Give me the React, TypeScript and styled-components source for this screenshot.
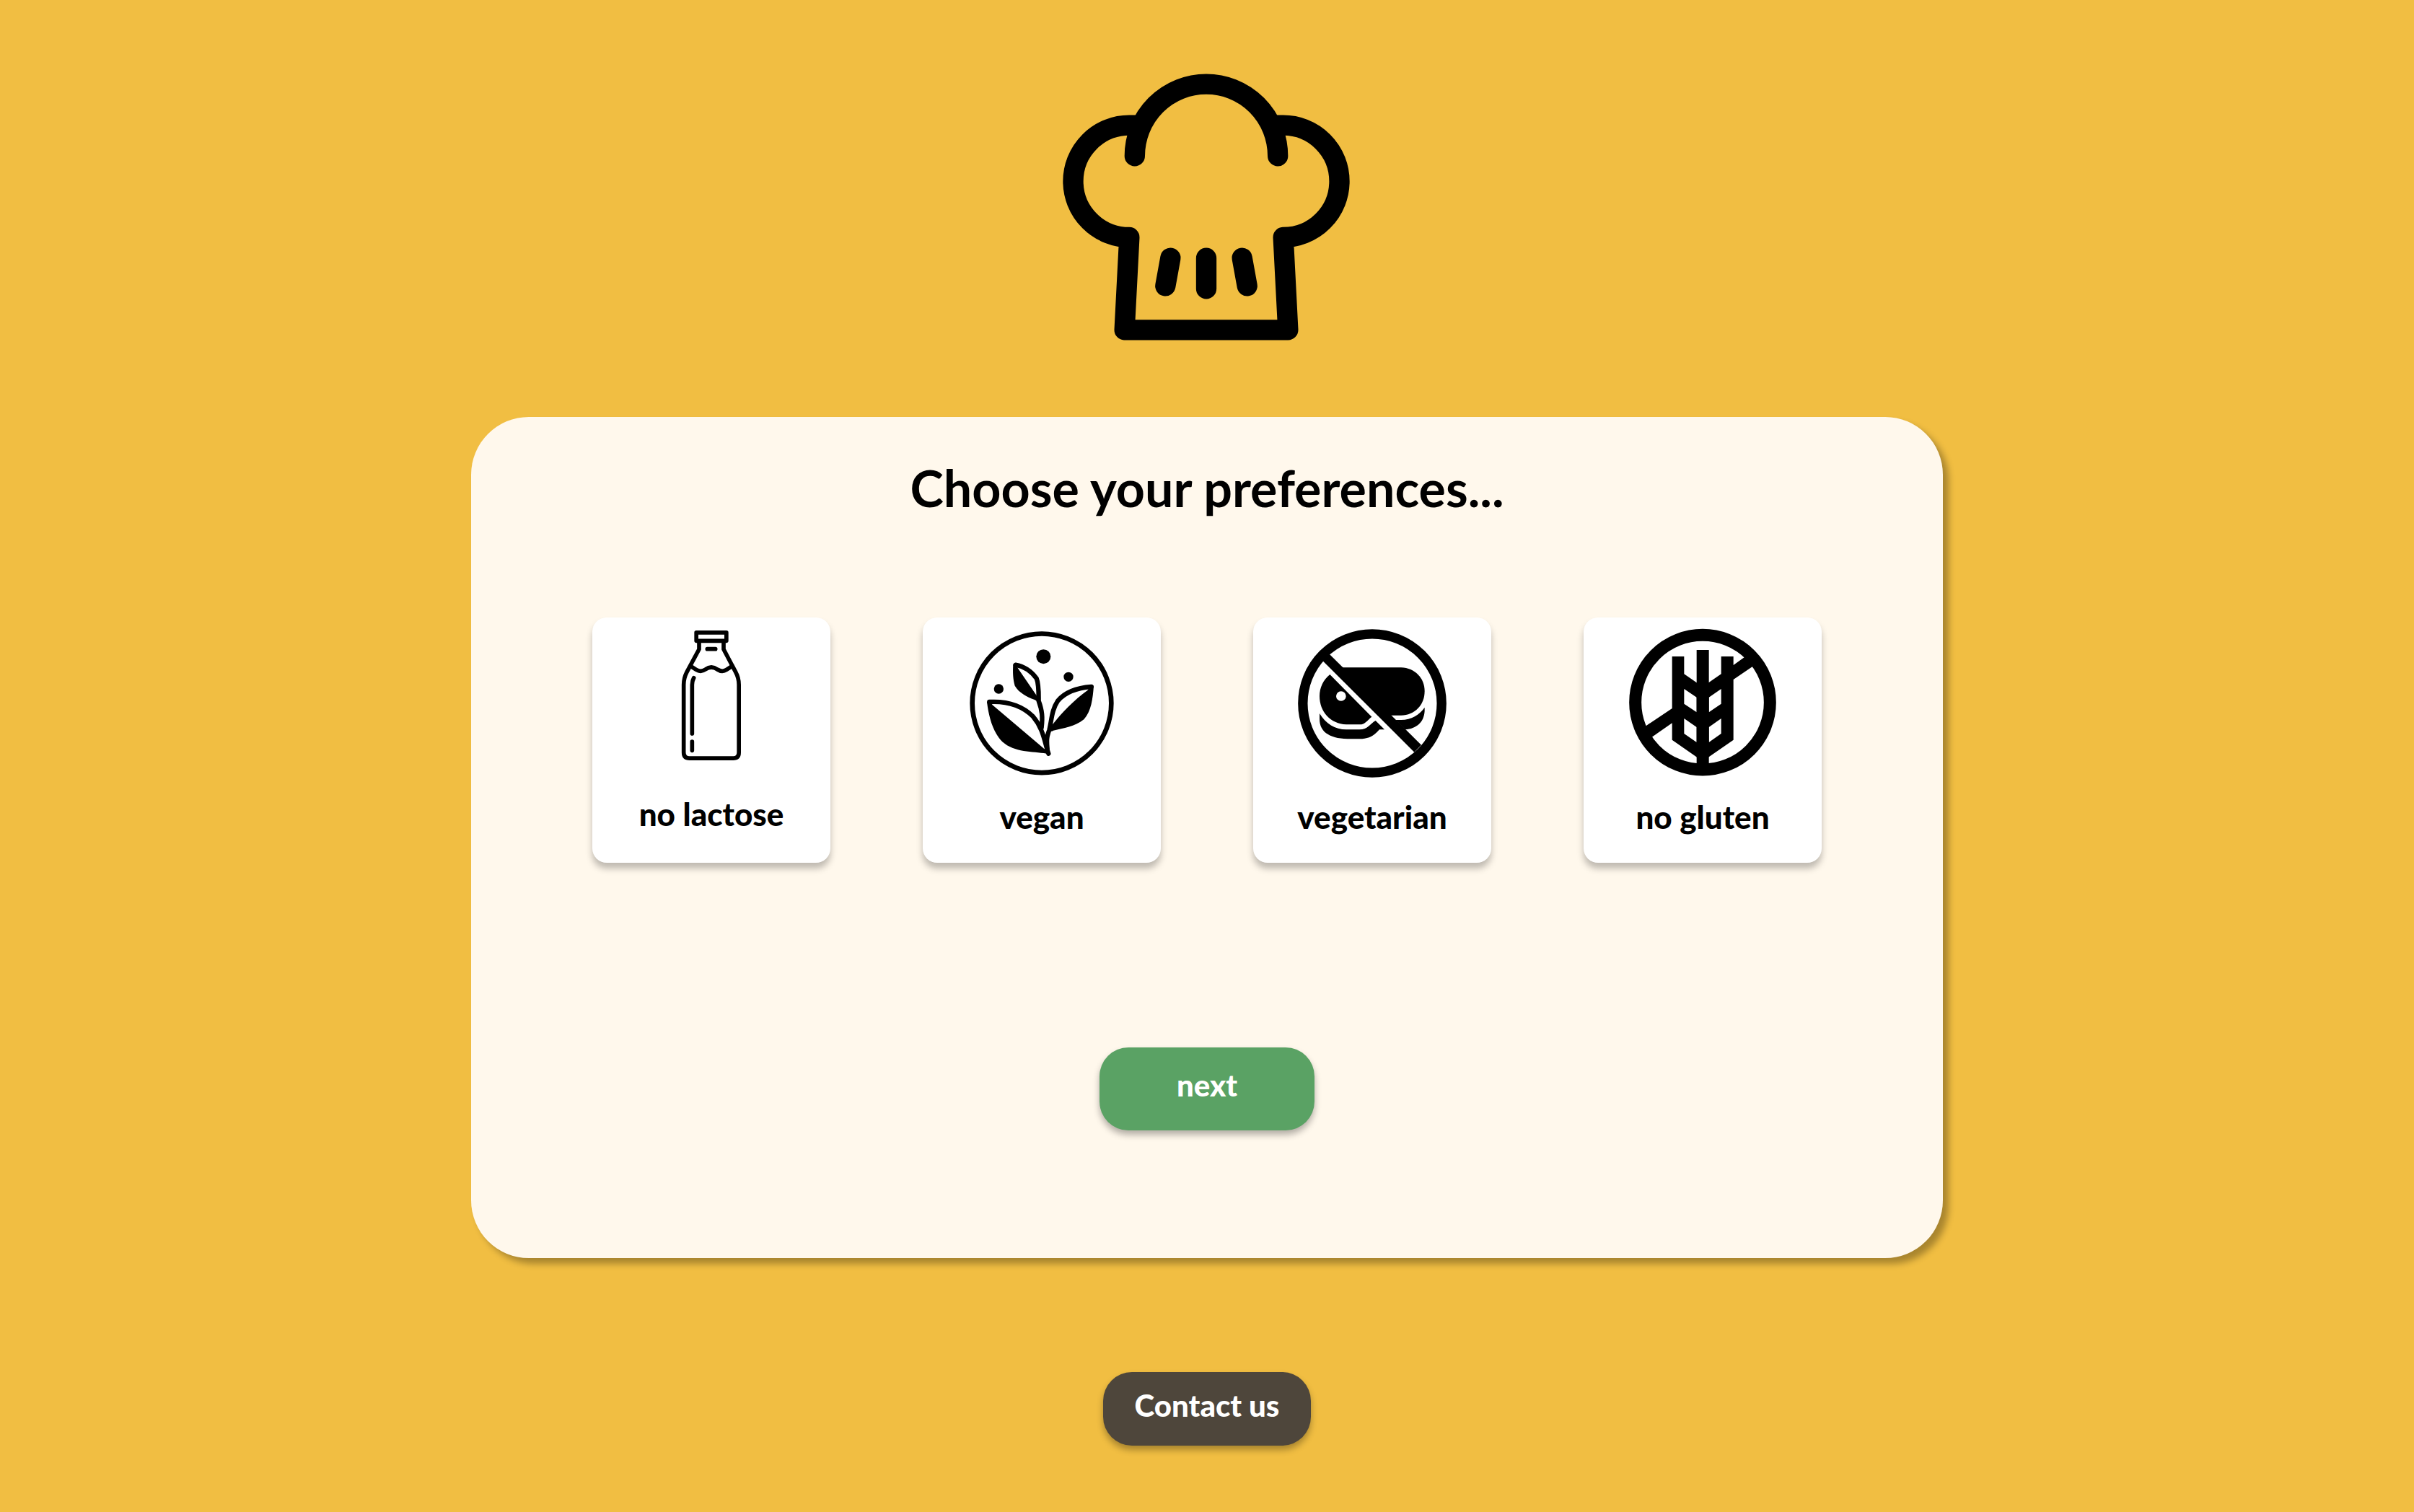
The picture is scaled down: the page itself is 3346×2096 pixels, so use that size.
import React, { useState } from 'react';
import styled, { createGlobalStyle } from 'styled-components';

const GlobalStyle = createGlobalStyle`
  *, *::before, *::after { box-sizing: border-box; }
  body {
    margin: 0;
    background: #f1be42;
    font-family: Lato, "Open Sans", sans-serif;
    color: #000;
  }
`;

const Page = styled.div`
  min-height: 100vh;
  display: flex;
  flex-direction: column;
  align-items: center;
  padding: 100px 0 92px;
`;

const Hat = styled.svg`
  display: block;
  width: 400px;
  height: 372px;
  fill: none;
  stroke: #000;
  stroke-width: 85;
  stroke-linecap: round;
  stroke-linejoin: round;
`;

const Panel = styled.main`
  width: 61%;
  min-width: 1240px;
  max-width: 2040px;
  margin-top: 106px;
  padding: 56px 64px 177px;
  display: flex;
  flex-direction: column;
  align-items: center;
  background: #fff8ec;
  border-radius: 80px;
  box-shadow: 8px 8px 10px rgba(0, 0, 0, 0.3);
`;

const Title = styled.h1`
  margin: 0;
  font-size: 70px;
  line-height: 84px;
  font-weight: 700;
`;

const Options = styled.div`
  display: flex;
  flex-wrap: wrap;
  justify-content: center;
  gap: 64px 128px;
  margin-top: 138px;
`;

const Card = styled.button`
  width: 330px;
  height: 340px;
  display: flex;
  flex-direction: column;
  align-items: center;
  padding: 12px 0 0;
  border: 0;
  border-radius: 20px;
  background: #fff;
  color: inherit;
  font: inherit;
  cursor: pointer;
  box-shadow: 0 8px 10px rgba(0, 0, 0, 0.25);
`;

const Art = styled.svg<{ $height: number }>`
  display: block;
  flex: none;
  width: 212px;
  height: ${(p) => p.$height}px;
`;

const Label = styled.span`
  margin-top: 28px;
  font-size: 44px;
  line-height: 48px;
  font-weight: 900;
`;

const PillButton = styled.button`
  border: 0;
  border-radius: 40px;
  color: #fff;
  font-family: inherit;
  font-size: 42px;
  line-height: 48px;
  font-weight: 900;
  cursor: pointer;
  box-shadow: 0 6px 10px rgba(0, 0, 0, 0.3);
`;

const NextButton = styled(PillButton)`
  width: 298px;
  margin-top: 256px;
  padding: 28px 24px 39px;
  background: #5aa264;
`;

const ContactButton = styled(PillButton)`
  width: 288px;
  margin-top: 158px;
  padding: 22px 24px 32px;
  background: #4e463b;
`;

const Bottle = () => (
  <Art $height={208} viewBox="237 84 636 624" aria-hidden="true">
    <g fill="none" stroke="#000" strokeWidth="17" strokeLinecap="round" strokeLinejoin="round">
      <path d="M492.500 110.500H617.500V145H492.500Z" />
      <path d="M504 147V180L453 275Q440 300 440 328V609Q440 633.500 464 633.500H646Q669.500 633.500 669.500 609V328Q669.500 300 656 275L606 180V147" />
      <path d="M538 179H572M482 299Q475 312 475 328V531M475 564V601" />
      <path d="M470 251L492 265Q511 277 530 264Q555 246 580 264Q600 277 618 265L640 251" />
    </g>
  </Art>
);

const Leaves = () => (
  <Art $height={212} viewBox="231 84 636 636" aria-hidden="true">
    <g fill="none" stroke="#000" strokeWidth="19" strokeLinecap="round" strokeLinejoin="round">
      <circle cx="549" cy="404.500" r="289" strokeWidth="20" />
      <path d="M440 245C478 252 507 274 527 301C537 325 536 360 536 395C551 436 553 462 548 506" />
      <path d="M331 399C405 395 464 412 512 459C556 511 560 565 577 614" />
      <path d="M755 336C701 340 650 354 616 394C590 433 591 470 580 516C569 545 569 560 572 592" />
    </g>
    <path d="M430 243Q440 232 449 258L527 372L541 402Q536 400 519 390C486 377 455 362 437 332C429 306 428 275 430 243Z" />
    <path d="M321 400Q329 388 344 412L558 593L584 612Q581 626 569 614C510 605 435 610 385 565C345 524 329 462 321 400Z" />
    <path d="M765 332Q757 326 740 350C684 390 632 444 593 494L580 520Q588 524 597 518C640 508 685 503 724 472C755 437 761 386 765 332Z" />
    <circle cx="556" cy="210.500" r="30" />
    <circle cx="660" cy="295" r="20" />
    <circle cx="370" cy="345" r="20" />
  </Art>
);

const NoMeat = () => (
  <Art $height={212} viewBox="225 84 636 636" aria-hidden="true">
    <circle cx="543" cy="405" r="288.500" fill="none" stroke="#000" strokeWidth="40" />
    <path d="M368 203L747 578L718 608L340 231L330 215L350 195Z" />
    <path d="M418 256H663C721 258 761 300 761 355C761 412 719 455 663 455H617Z" />
    <path fillRule="evenodd" d="M367 285L541 461C522 475 515 493 490 493H435C370 490 324 440 324 375C324 340 339 308 367 285ZM393 375A20.500 20.500 0 1 0 434 375A20.500 20.500 0 1 0 393 375Z" />
    <path d="M324 447C350 490 388 514 435 514H490C525 514 536 488 557 477L594 514H573C553 538 530 553 490 553H440C365 551 324 523 324 470Z" />
    <path d="M761 422V437C758 484 727 510 680 514L640 474H663C706 473 739 453 761 422Z" />
  </Art>
);

const NoGluten = () => (
  <Art $height={212} viewBox="249 84 636 636" aria-hidden="true">
    <circle cx="567" cy="401" r="280" fill="none" stroke="#000" strokeWidth="51" />
    <path d="M542 183H593V680H542Z" />
    <path d="M440 210H490V283L567 336L644 283V210H695V246L745 210L782 247L695 306V557L567 646L440 557V487L352 548L325 503L440 426ZM490 345V407L542 442V380ZM644 345L593 380V442L644 407ZM490 468V531L542 567V504ZM644 468L593 504V567L644 531Z" fillRule="evenodd" />
  </Art>
);

const preferences = [
  { label: 'no lactose', Icon: Bottle },
  { label: 'vegan', Icon: Leaves },
  { label: 'vegetarian', Icon: NoMeat },
  { label: 'no gluten', Icon: NoGluten },
];

export default function App() {
  const [chosen, setChosen] = useState<string[]>([]);
  const toggle = (label: string) =>
    setChosen((prev) => (prev.includes(label) ? prev.filter((l) => l !== label) : [...prev, label]));

  return (
    <>
      <GlobalStyle />
      <Page>
        <Hat viewBox="99 60 1200 1116" role="img" aria-label="Chef hat">
          <path d="M398.500 409A297.500 299 0 0 1 993.500 409" />
          <path d="M400 281H376A233.500 233 0 0 0 376 747L356 1132H1036L1016 747A233.500 233 0 0 0 1016 281H992" />
          <path d="M547 833L526 949M696 833V961M845 833L866 949" />
        </Hat>
        <Panel>
          <Title>Choose your preferences...</Title>
          <Options>
            {preferences.map(({ label, Icon }) => (
              <Card key={label} type="button" aria-pressed={chosen.includes(label)} onClick={() => toggle(label)}>
                <Icon />
                <Label>{label}</Label>
              </Card>
            ))}
          </Options>
          <NextButton type="button">next</NextButton>
        </Panel>
        <ContactButton type="button">Contact us</ContactButton>
      </Page>
    </>
  );
}
